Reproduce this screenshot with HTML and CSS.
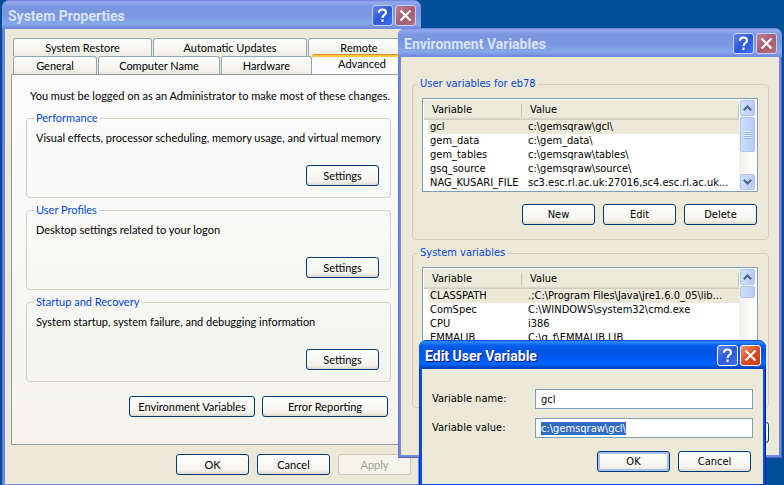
FILE: index.html
```html
<!DOCTYPE html>
<html lang="en">
<head>
<meta charset="utf-8">
<title>System Properties</title>
<link rel="stylesheet" href="styles.css">
</head>
<body>
<svg class="defs" aria-hidden="true">
  <symbol id="help" viewBox="0 0 15 15"><path d="M4 4.800C4 2.400 5.400 1.500 7.400 1.500c2.200 0 3.600 1.100 3.600 3C11 7 7.500 7 7.500 10M7.500 11.500v2.500" fill="none" stroke="currentColor" stroke-width="2.200"/></symbol>
  <symbol id="cross" viewBox="0 0 15 15"><path d="M2.500 2.500l10 10M12.500 2.500l-10 10" fill="none" stroke="currentColor" stroke-width="2.200"/></symbol>
  <symbol id="up" viewBox="0 0 9 6"><path d="M.8 5.200L4.500 1.500l3.700 3.700" fill="none" stroke="currentColor" stroke-width="2"/></symbol>
  <symbol id="down" viewBox="0 0 9 6"><path d="M.8.8l3.700 3.700L8.200.8" fill="none" stroke="currentColor" stroke-width="2"/></symbol>
</svg>
<main class="desktop">

  <section class="window system" aria-labelledby="t1">
    <header class="titlebar">
      <h1 id="t1">System Properties</h1>
      <button class="caption" aria-label="Help"><svg><use href="#help"/></svg></button>
      <button class="caption close" aria-label="Close"><svg><use href="#cross"/></svg></button>
    </header>
    <div class="client">
      <div class="tabs" role="tablist">
        <div class="tabrow upper">
          <button class="tab" role="tab">System Restore</button>
          <button class="tab" role="tab">Automatic Updates</button>
          <button class="tab" role="tab">Remote</button>
        </div>
        <div class="tabrow lower">
          <button class="tab" role="tab">General</button>
          <button class="tab" role="tab">Computer Name</button>
          <button class="tab" role="tab">Hardware</button>
          <button class="tab active" role="tab" aria-selected="true">Advanced</button>
        </div>
      </div>
      <div class="panel" role="tabpanel">
        <p class="note">You must be logged on as an Administrator to make most of these changes.</p>
        <fieldset class="group">
          <legend>Performance</legend>
          <p>Visual effects, processor scheduling, memory usage, and virtual memory</p>
          <button class="btn">Settings</button>
        </fieldset>
        <fieldset class="group">
          <legend>User Profiles</legend>
          <p>Desktop settings related to your logon</p>
          <button class="btn">Settings</button>
        </fieldset>
        <fieldset class="group">
          <legend>Startup and Recovery</legend>
          <p>System startup, system failure, and debugging information</p>
          <button class="btn">Settings</button>
        </fieldset>
        <div class="links">
          <button class="btn wide">Environment Variables</button>
          <button class="btn wide">Error Reporting</button>
        </div>
      </div>
      <footer class="actions">
        <button class="btn">OK</button>
        <button class="btn">Cancel</button>
        <button class="btn" disabled>Apply</button>
      </footer>
    </div>
  </section>

  <section class="window environment" aria-labelledby="t2">
    <header class="titlebar">
      <h1 id="t2">Environment Variables</h1>
      <button class="caption" aria-label="Help"><svg><use href="#help"/></svg></button>
      <button class="caption close" aria-label="Close"><svg><use href="#cross"/></svg></button>
    </header>
    <div class="client">
      <fieldset class="vars">
        <legend>User variables for eb78</legend>
        <div class="list">
          <table>
            <thead><tr><th>Variable</th><th>Value</th></tr></thead>
            <tbody>
              <tr class="selected"><td>gcl</td><td>c:\gemsqraw\gcl\</td></tr>
              <tr><td>gem_data</td><td>c:\gem_data\</td></tr>
              <tr><td>gem_tables</td><td>c:\gemsqraw\tables\</td></tr>
              <tr><td>gsq_source</td><td>c:\gemsqraw\source\</td></tr>
              <tr><td>NAG_KUSARI_FILE</td><td>sc3.esc.rl.ac.uk:27016,sc4.esc.rl.ac.uk...</td></tr>
            </tbody>
          </table>
          <div class="scroll">
            <span class="arrow"><svg><use href="#up"/></svg></span>
            <span class="thumb long"><i class="grip"></i></span>
            <span class="arrow last"><svg><use href="#down"/></svg></span>
          </div>
        </div>
        <div class="buttons">
          <button class="btn">New</button>
          <button class="btn">Edit</button>
          <button class="btn">Delete</button>
        </div>
      </fieldset>
      <fieldset class="vars">
        <legend>System variables</legend>
        <div class="list">
          <table>
            <thead><tr><th>Variable</th><th>Value</th></tr></thead>
            <tbody>
              <tr class="selected"><td>CLASSPATH</td><td>.;C:\Program Files\Java\jre1.6.0_05\lib...</td></tr>
              <tr><td>ComSpec</td><td>C:\WINDOWS\system32\cmd.exe</td></tr>
              <tr><td>CPU</td><td>i386</td></tr>
              <tr><td>EMMALIB</td><td>C:\g_f\EMMALIB.LIB</td></tr>
            </tbody>
          </table>
          <div class="scroll">
            <span class="arrow"><svg><use href="#up"/></svg></span>
            <span class="thumb"></span>
          </div>
        </div>
      </fieldset>
      <footer class="actions">
        <button class="btn" aria-label="Close variables"></button>
      </footer>
    </div>
  </section>

  <section class="window edit" aria-labelledby="t3">
    <header class="titlebar">
      <h1 id="t3">Edit User Variable</h1>
      <button class="caption" aria-label="Help"><svg><use href="#help"/></svg></button>
      <button class="caption close" aria-label="Close"><svg><use href="#cross"/></svg></button>
    </header>
    <form class="client">
      <div class="field"><label for="name">Variable name:</label><input id="name" type="text" value="gcl"></div>
      <div class="field"><label for="value">Variable value:</label><input id="value" type="text" value="c:\gemsqraw\gcl\"></div>
      <footer class="actions">
        <button type="button" class="btn default">OK</button>
        <button type="button" class="btn">Cancel</button>
      </footer>
    </form>
  </section>
</main>
<script src="script.js"></script>
</body>
</html>
```

FILE: styles.css
```css
* { box-sizing: border-box; }

body {
  margin: 0;
  background: #004e98;
  color: #000;
  font: 11px/14px Lato, Arial, sans-serif;
}

button, input { font: inherit; color: inherit; }
p, h1 { margin: 0; font-size: inherit; }
fieldset { margin: 0; min-width: 0; }
.defs { position: absolute; width: 0; height: 0; }

.desktop {
  position: relative;
  height: 100vh;
  overflow: hidden;
}

/* Windows */
.window {
  position: absolute;
  display: flex;
  flex-direction: column;
  border-radius: 8px 8px 0 0;
  background: #7088e0;
  box-shadow: inset 1px 0 #6a72d0, inset -1px -1px #5c5cb8;
  padding: 0 3px 3px;
}
.system { left: 2px; top: 0; width: 419px; height: 486px; }
.environment { left: 398px; top: 28px; width: 384px; height: 430px; }
.edit { left: 419px; top: 340px; width: 347px; height: 147px; }
.environment, .edit { font-family: "DejaVu Sans Condensed", Tahoma, sans-serif; }

.titlebar {
  flex: none;
  display: flex;
  align-items: center;
  gap: 2px;
  height: 29px;
  margin: 0 -3px;
  padding: 2px 5px 0 6px;
  border-radius: 8px 8px 0 0;
  background: linear-gradient(#6f80d8 0, #94aaee 2px, #7b95e0 7px, #7b97e2 16px, #84a9ea 24px, #7489dc 28px);
  color: #d8e4f8;
}
.titlebar h1 {
  flex: 1;
  font: bold 14px/18px Roboto, sans-serif;
  white-space: nowrap;
}
.caption {
  width: 21px;
  height: 21px;
  padding: 2px;
  border: 1px solid #c4d2f6;
  border-radius: 3px;
  background: linear-gradient(135deg, #6084ec, #2f58d8 50%, #3e70f0);
}
.caption svg { display: block; width: 15px; height: 15px; color: #fff; }
.caption.close { background: linear-gradient(135deg, #c08094, #a85c70 50%, #b4707c); }

.edit {
  background: #0a4fe4;
  box-shadow: inset 1px 0 #0831d9, inset -1px -1px #001da0;
}
.edit .titlebar {
  background: linear-gradient(#0545c0 0, #2f8cff 2px, #0860ee 5px, #0054e3 10px, #0058ee 17px, #0066ff 24px, #0042c0 28px);
  color: #fff;
  text-shadow: 1px 1px #0a1883;
}
.edit .caption { border-color: #fff; }
.edit .close { background: linear-gradient(135deg, #f09070, #dc4c24 50%, #cc3c10); }

.client {
  flex: 1;
  display: flex;
  flex-direction: column;
  background: #ece9d8;
}

/* Push buttons */
.btn {
  width: 73px;
  height: 21px;
  padding: 0;
  border: 1px solid #003c74;
  border-radius: 3px;
  background: linear-gradient(#fff, #f4f3ee 80%, #dcd8cc);
}
.btn.wide { width: 126px; }
.btn:disabled {
  border-color: #c9c7ba;
  background: #f5f4ea;
  color: #a1a192;
}
.btn.default { box-shadow: inset 0 0 0 2px #a8c0f0; }
.actions { display: flex; justify-content: flex-end; gap: 8px; }

/* System Properties */
.system .client { padding: 9px 6px; }
.tabrow { display: flex; gap: 1px; padding: 0 2px; }
.tab {
  flex: none;
  height: 18px;
  padding: 0;
  border: 1px solid #91a7b4;
  border-bottom: 0;
  border-radius: 3px 3px 0 0;
  background: linear-gradient(#fff, #f6f5ef 60%, #ecebe4);
}
.upper .tab { width: 154px; }
.upper .tab:first-child { width: 139px; }
.upper .tab:last-child { flex: 1; }
.lower .tab { width: 91px; }
.lower .tab:nth-child(1) { width: 84px; }
.lower .tab:nth-child(2) { width: 122px; }
.lower .tab.active {
  flex: 1;
  height: 20px;
  margin: -1px -2px -1px -1px;
  padding-bottom: 4px;
  border: 0;
  border-top: 2px solid #ffc73c;
  box-shadow: 0 -1px #e68b2c;
  background: #fcfcfe;
}
.panel {
  height: 371px;
  padding: 14px 20px 0 14px;
  border: 1px solid #919b9c;
  background: linear-gradient(#fcfcfe, #f4f3ee);
}
.note { padding-left: 4px; margin-bottom: 8px; white-space: nowrap; }
legend { height: 14px; padding: 0 2px; color: #0046d5; }
.group {
  display: flex;
  flex-direction: column;
  height: 87px;
  margin-bottom: 5px;
  padding: 6px 11px 11px 9px;
  border: 1px solid #d0d0bf;
  border-radius: 4px;
}
.group legend { margin-left: -2px; }
.group p { white-space: nowrap; }
.group .btn { margin: auto 0 0 auto; }
.links { display: flex; justify-content: flex-end; gap: 7px; padding: 9px 3px 0 0; }
.system .actions { padding: 9px 1px 0 0; }

/* Environment Variables */
.environment .client { padding: 20px 10px 11px 11px; gap: 6px; }
.vars {
  padding: 7px 10px 14px 9px;
  border: 1px solid #d0d0bf;
  border-radius: 4px;
}
.vars legend { margin-left: -4px; }
.vars:nth-of-type(2) { height: 162px; }
.list {
  display: flex;
  height: 94px;
  padding: 1px;
  border: 1px solid #7f9db9;
  background: #fff;
}
.list table {
  flex: 1;
  align-self: flex-start;
  border-collapse: collapse;
  table-layout: fixed;
}
th, td { padding: 0; text-align: left; font-weight: normal; white-space: nowrap; }
th {
  height: 20px;
  padding-left: 8px;
  background:
    linear-gradient(#c8c5b2, #c8c5b2) right center / 1px 13px no-repeat,
    linear-gradient(#ebeadb 17px, #cbc7b8);
}
th:first-child { width: 98px; }
td { height: 14px; padding-left: 6px; }
.selected td { background: #ece9d8; }
.selected td:first-child { box-shadow: inset 4px 0 #fff; }
.scroll {
  display: flex;
  flex-direction: column;
  gap: 1px;
  width: 17px;
  background: linear-gradient(90deg, #f3f1ec, #fefefb);
}
.arrow, .thumb {
  display: flex;
  align-items: center;
  justify-content: center;
  height: 16px;
  margin: 0 1px;
  border: 1px solid #b0c4f4;
  border-radius: 2px;
  background: linear-gradient(90deg, #d0defc, #b8ccf8);
  color: #4d6185;
}
.arrow svg { width: 9px; height: 6px; }
.thumb { height: 12px; }
.thumb.long { height: 35px; }
.arrow.last { margin-top: auto; }
.grip { width: 7px; height: 8px; background: repeating-linear-gradient(#eef4fe 0 1px, #8cb0f8 1px 2px); }
.buttons { display: flex; justify-content: flex-end; gap: 8px; padding: 12px 1px 0 0; }
.environment > .client > .actions { padding-top: 8px; }

/* Edit User Variable */
.edit .client { padding: 20px 10px 10px; gap: 9px; }
.field { display: flex; align-items: center; }
.field label { flex: 0 0 103px; }
.field input {
  flex: 1;
  min-width: 0;
  height: 20px;
  padding: 0 5px;
  border: 1px solid #7f9db9;
  background: #fff;
  outline: 0;
}
.field input::selection { background: #316ac5; color: #fff; }
.edit .actions { padding: 4px 2px 0; }
```

FILE: script.js
```js
const value = document.getElementById("value");
value.focus();
value.select();
```
